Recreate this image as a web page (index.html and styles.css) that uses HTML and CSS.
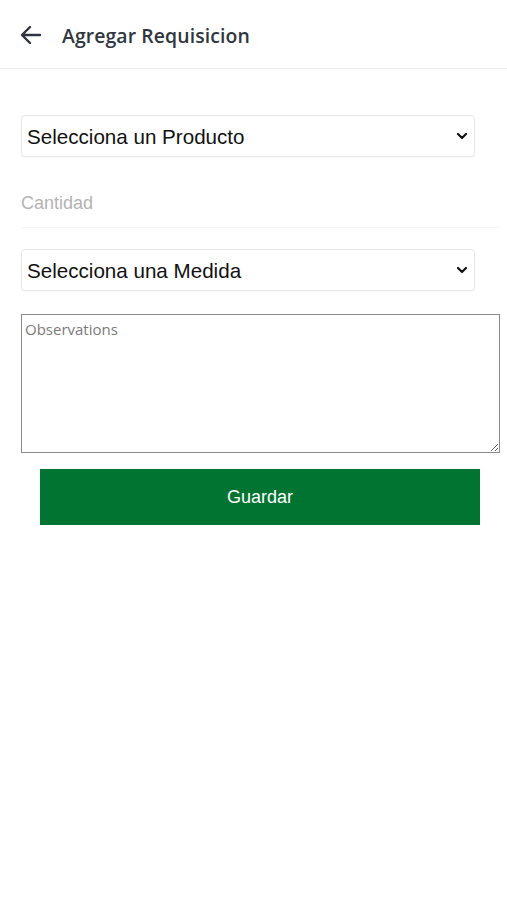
FILE: index.html
```html
<!DOCTYPE html>
<html lang="es">
<head>
    <meta charset="UTF-8">
    <meta name="viewport" content="width=device-width, initial-scale=1.0">
    <title>Agregar Requisicion</title>
    <link rel="stylesheet" href="styles.css">
</head>
<body>
    <!-- Header -->
    <header class="top-bar">
        <button class="back-btn" type="button" aria-label="Volver">
            <svg width="22" height="20" viewBox="0 0 22 20">
                <path d="M20 10H3M10 2L2 10l8 8" fill="none" stroke="#2e3540" stroke-width="2.4" stroke-linecap="round" stroke-linejoin="round"/>
            </svg>
        </button>
        <h1 class="title">Agregar Requisicion</h1>
    </header>

    <!-- Requisition form -->
    <form class="req-form">
        <div class="select-wrap">
            <select class="field-select">
                <option>Selecciona un Producto</option>
            </select>
            <svg class="chevron" width="12" height="8" viewBox="0 0 12 8">
                <path d="M2 2l4 4 4-4" fill="none" stroke="#111" stroke-width="2.2" stroke-linecap="round" stroke-linejoin="round"/>
            </svg>
        </div>

        <input class="qty-input" type="number" placeholder="Cantidad">

        <div class="select-wrap">
            <select class="field-select">
                <option>Selecciona una Medida</option>
            </select>
            <svg class="chevron" width="12" height="8" viewBox="0 0 12 8">
                <path d="M2 2l4 4 4-4" fill="none" stroke="#111" stroke-width="2.2" stroke-linecap="round" stroke-linejoin="round"/>
            </svg>
        </div>

        <textarea class="notes" placeholder="Observations"></textarea>

        <button class="save-btn" type="submit">Guardar</button>
    </form>
</body>
</html>
```

FILE: styles.css
```css
body {
    margin: 0;
    background: #fff;
    font-family: 'Liberation Sans', Arial, sans-serif;
    color: #111;
}

.top-bar {
    height: 69px;
    display: flex;
    align-items: center;
    padding-left: 19px;
    padding-top: 2px;
    border-bottom: 1px solid #ececec;
    box-sizing: border-box;
}

.back-btn {
    background: none;
    border: none;
    padding: 0;
    width: 24px;
    height: 24px;
    display: flex;
    align-items: center;
    justify-content: center;
    margin-right: 19px;
}

.title {
    margin: 0;
    font-family: 'Open Sans', sans-serif;
    font-size: 19.4px;
    font-weight: 600;
    color: #30363f;
    letter-spacing: 0.1px;
}

.req-form {
    display: flex;
    flex-direction: column;
    padding: 46px 7px 0 21px;
}

.select-wrap {
    position: relative;
    width: 454px;
}

.field-select {
    appearance: none;
    -webkit-appearance: none;
    width: 100%;
    height: 42px;
    border: 1px solid #e8e8e8;
    border-radius: 4px;
    background: #fff;
    padding: 0 30px 0 5px;
    font-family: 'Liberation Sans', Arial, sans-serif;
    font-size: 20.6px;
    color: #111;
    box-shadow: 0 1px 2px rgba(0, 0, 0, 0.03);
}

.chevron {
    position: absolute;
    right: 7px;
    top: 17px;
    pointer-events: none;
}

.qty-input {
    height: 48px;
    margin: 22px 0 21px;
    border: none;
    border-bottom: 1px solid #f6f6f6;
    padding: 0;
    font-family: 'Liberation Sans', Arial, sans-serif;
    font-size: 18px;
    color: #111;
    outline: none;
}

.qty-input::placeholder {
    color: #b4b4b4;
}

.notes {
    margin-top: 23px;
    width: 479px;
    height: 139px;
    box-sizing: border-box;
    border: 1px solid #8a8a8a;
    padding: 4px 3px;
    font-family: 'Open Sans', sans-serif;
    font-size: 15px;
    resize: vertical;
}

.notes::placeholder {
    color: #7a7a7a;
}

.save-btn {
    margin: 16px 0 0 19px;
    width: 440px;
    height: 56px;
    border: none;
    background-color: #017432;
    color: #fff;
    font-family: 'Liberation Sans', Arial, sans-serif;
    font-size: 18px;
    cursor: pointer;
}
```
